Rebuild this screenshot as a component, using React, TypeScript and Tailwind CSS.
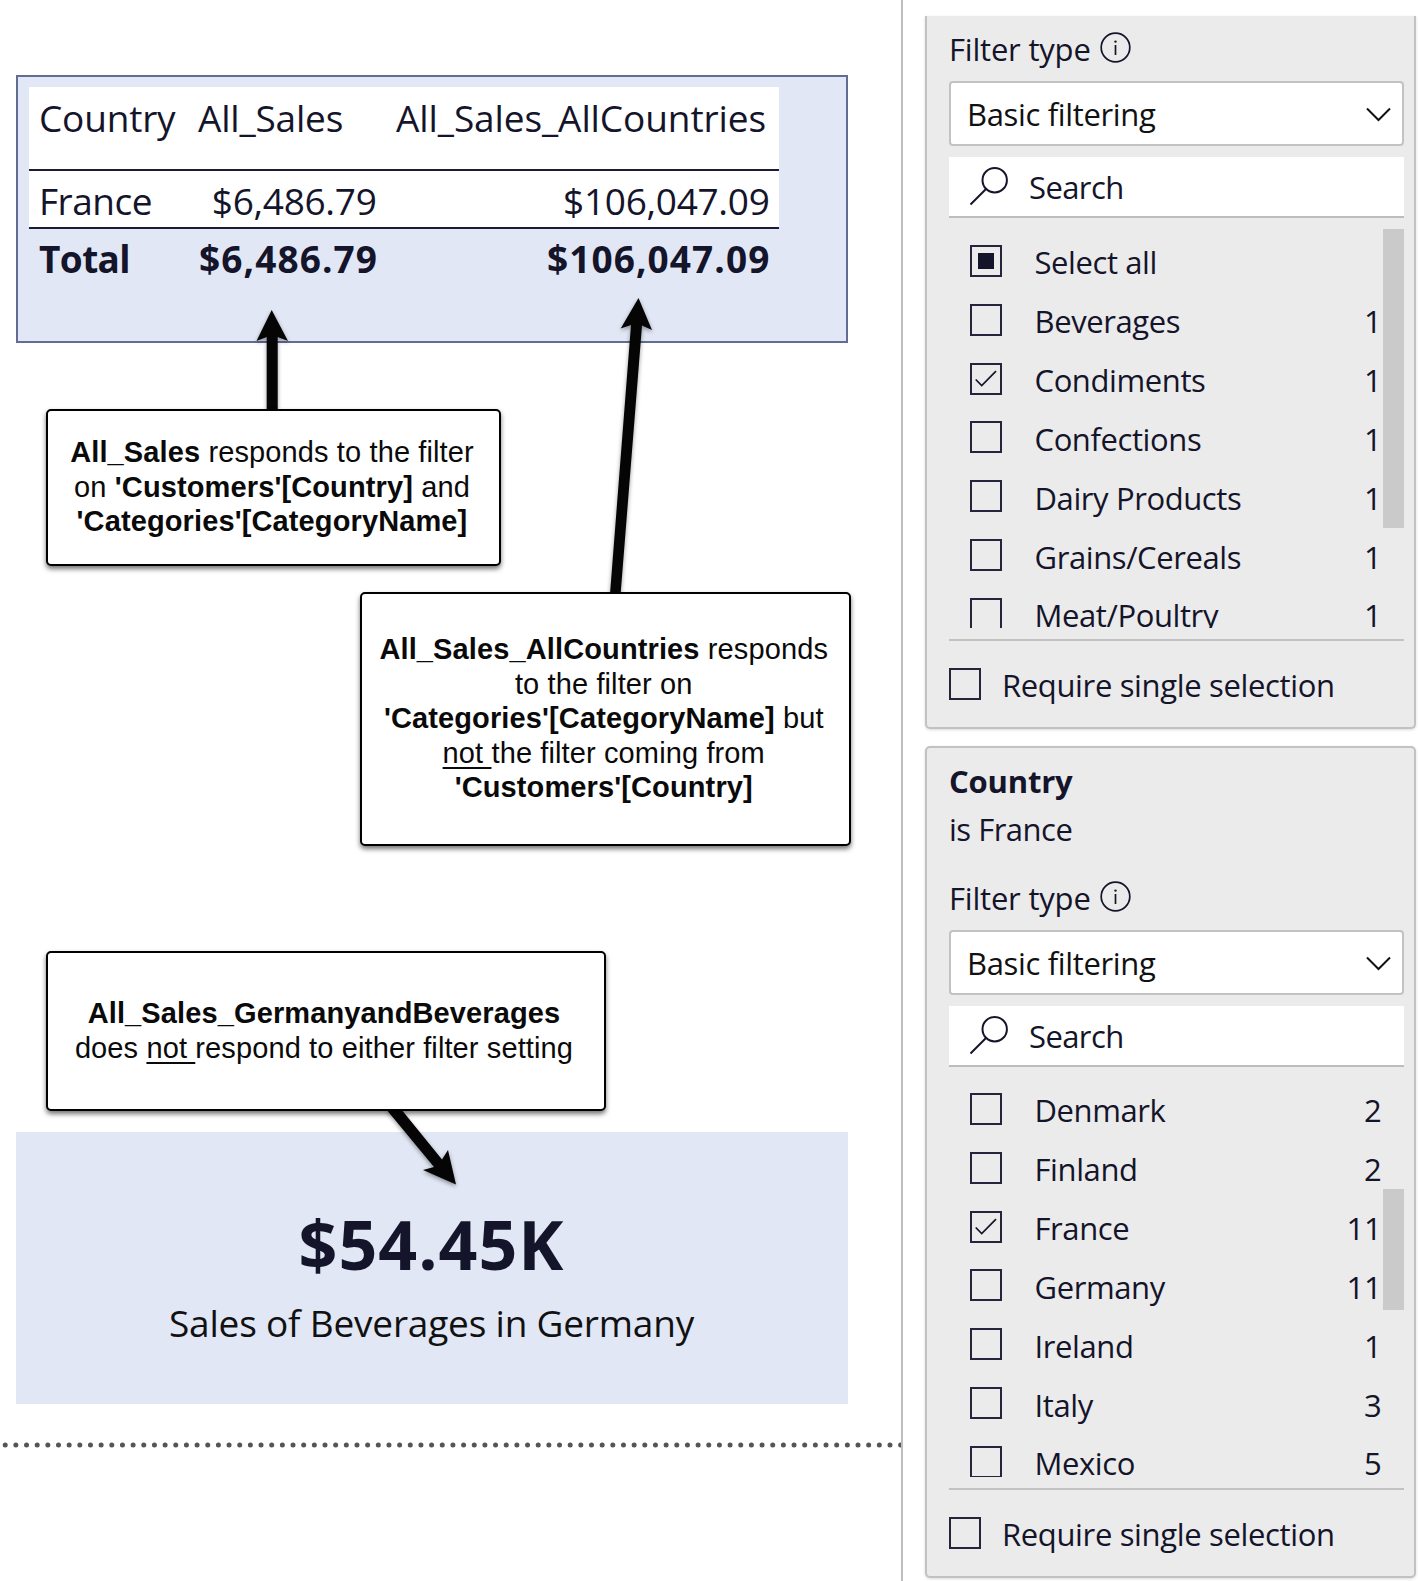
import React from "react";

type Item = { label: string; count?: string; state?: "checked" | "partial" };

const categories: Item[] = [
  { label: "Select all", state: "partial" },
  { label: "Beverages", count: "1" },
  { label: "Condiments", count: "1", state: "checked" },
  { label: "Confections", count: "1" },
  { label: "Dairy Products", count: "1" },
  { label: "Grains/Cereals", count: "1" },
  { label: "Meat/Poultry", count: "1" },
];

const countries: Item[] = [
  { label: "Denmark", count: "2" },
  { label: "Finland", count: "2" },
  { label: "France", count: "11", state: "checked" },
  { label: "Germany", count: "11" },
  { label: "Ireland", count: "1" },
  { label: "Italy", count: "3" },
  { label: "Mexico", count: "5" },
];

function Checkbox({ state }: { state?: "checked" | "partial" }) {
  return (
    <span className="flex size-8 shrink-0 items-center justify-center border-2 border-[#24243a]">
      {state === "partial" && <span className="size-4 bg-[#14142a]" />}
      {state === "checked" && (
        <svg width="22" height="18" viewBox="0 0 22 18" fill="none" stroke="#14142a" strokeWidth="1.7">
          <path d="M0.7 9.5 L6.7 15.5 L21 1.2" />
        </svg>
      )}
    </span>
  );
}

function FilterBody({ items, listPad, thumb }: { items: Item[]; listPad: string; thumb: string }) {
  return (
    <div>
      <div className="flex h-[42px] items-center gap-[9px]">
        <span>Filter type</span>
        <svg className="relative -top-[2px]" width="31" height="31" viewBox="0 0 31 31" fill="none" stroke="#14142a" strokeWidth="1.7">
          <circle cx="15.5" cy="15.5" r="14.3" />
          <path d="M15.5 13v10" />
          <circle cx="15.5" cy="9.6" r="1.2" fill="#14142a" stroke="none" />
        </svg>
      </div>
      <div className="mt-[11px] flex h-[65px] items-center justify-between rounded-[4px] border-2 border-[#c2c2c2] bg-white pr-[11px] pl-[16px] text-[#111]">
        <span className="pt-px tracking-[-0.35px]">Basic filtering</span>
        <svg className="mt-[2px]" width="25" height="15" viewBox="0 0 25 15" fill="none" stroke="#111" strokeWidth="2">
          <path d="M1 1.5 L12.5 13 L24 1.5" />
        </svg>
      </div>
      <div className="mt-[11px] flex h-[61px] items-center border-b-2 border-[#bdbdbd] bg-white pl-[20px]">
        <svg className="-mt-[2px]" width="40" height="40" viewBox="0 0 40 40" fill="none" stroke="#14142a" strokeWidth="2">
          <circle cx="25.7" cy="14.2" r="12.2" />
          <path d="M17 23 L1.5 38.5" />
        </svg>
        <span className="ml-[20px] pt-px tracking-[-0.6px]">Search</span>
      </div>
      <div className={"relative h-[409.5px] overflow-hidden " + listPad}>
        {items.map((item) => (
          <div key={item.label} className="flex h-[58.83px] items-center pr-[22.5px] pl-[21px]">
            <Checkbox state={item.state} />
            <span className="ml-[32.5px] flex-1 pt-[3px] tracking-[-0.4px]">{item.label}</span>
            <span className="pt-[3px]">{item.count}</span>
          </div>
        ))}
        <div className={"absolute right-0 w-[21px] bg-[#cbcacb] " + thumb} />
      </div>
      <div className="mt-[11.5px] h-[2px] bg-[#c2c2c2]" />
      <div className="mt-[27px] flex h-8 items-center gap-[21px]">
        <Checkbox />
        <span className="pt-px tracking-[-0.35px]">Require single selection</span>
      </div>
    </div>
  );
}

function Callout({ className, children }: { className: string; children: React.ReactNode }) {
  return (
    <div
      className={
        "absolute rounded-[5px] border-2 border-black bg-white text-center font-['Liberation_Sans',Arial,sans-serif] text-[29px] leading-[34.5px] tracking-[0.12px] whitespace-nowrap text-[#0a0a0a] shadow-[0_3px_5px_rgba(0,0,0,0.55)] " +
        className
      }
    >
      {children}
    </div>
  );
}

export default function App() {
  return (
    <div className="flex h-[1581px] w-[1418px] overflow-hidden bg-white font-['Open_Sans','Noto_Sans',sans-serif] text-[#14142a]">
      <main className="relative w-[901px] shrink-0 pt-[75px]">
        <section className="ml-[15.5px] h-[268px] w-[832px] border-2 border-[#626d94] bg-[#e2e7f5] pt-[10px] pl-[11.5px] text-[37px] leading-[50px] tracking-[-0.2px]">
          <div className="w-[750px]">
            <div className="grid h-[84px] grid-cols-[160px_198px_auto] border-b-2 border-[#1c1c34] bg-white pt-[6px] pl-[10px]">
              <span>Country</span>
              <span className="-ml-px">All_Sales</span>
              <span className="-ml-px tracking-[-0.1px]">All_Sales_AllCountries</span>
            </div>
            <div className="grid h-[58px] grid-cols-[160px_177.5px_393px] items-center border-b-2 border-[#1c1c34] bg-white pt-[3px] pl-[10px]">
              <span className="tracking-[-0.5px]">France</span>
              <span className="text-right tracking-[-0.3px]">$6,486.79</span>
              <span className="text-right tracking-[-0.3px]">$106,047.09</span>
            </div>
            <div className="grid h-[60px] grid-cols-[160px_178.5px_393px] items-center pl-[10px] font-bold tracking-[1.1px]">
              <span className="tracking-[-0.6px]">Total</span>
              <span className="text-right">$6,486.79</span>
              <span className="text-right">$106,047.09</span>
            </div>
          </div>
        </section>

        <section className="mt-[789px] ml-[15.5px] flex h-[272px] w-[832px] flex-col items-center bg-[#e2e7f5]">
          <div className="mt-[67px] h-[90px] text-[68px] leading-[90px] font-bold tracking-[1px]">$54.45K</div>
          <div className="mt-[9px] text-[37px] leading-[50px] tracking-[-0.2px] text-[#111]">Sales of Beverages in Germany</div>
        </section>

        <svg className="mt-[38px] block" width="901" height="6" viewBox="0 0 901 6">
          <line x1="5.2" y1="3" x2="901" y2="3" stroke="#555" strokeWidth="5" strokeLinecap="round" strokeDasharray="0 10.66" />
        </svg>

        <svg
          className="absolute top-0 left-0 drop-shadow-[0_2px_2px_rgba(0,0,0,0.4)]"
          width="901"
          height="1200"
          viewBox="0 0 901 1200"
          fill="#050505"
        >
          <path d="M271.7 310 L288 341 L277.7 337 V411 H266.7 V337 L256.5 341 Z" />
          <path d="M638.5 298 L652 330 L642 325.5 L620.6 594 H610 L631 325 L620.7 328.5 Z" />
          <path d="M456 1184.5 L448 1150 L442 1159.5 L401 1109 H386 L434 1167 L423 1170 Z" />
        </svg>

        <Callout className="top-[409px] left-[46px] h-[157px] w-[455px] pt-[24px] pr-[3px]">
          <b>All_Sales</b> responds to the filter
          <br />
          on <b>'Customers'[Country]</b> and
          <br />
          <b>'Categories'[CategoryName]</b>
        </Callout>
        <Callout className="top-[592px] left-[360px] h-[254px] w-[490.5px] pt-[38px] pr-[3px]">
          <b>All_Sales_AllCountries</b> responds
          <br />
          to the filter on
          <br />
          <b>'Categories'[CategoryName]</b> but
          <br />
          <span className="underline decoration-2 underline-offset-[4px]">not </span>the filter coming from
          <br />
          <b>'Customers'[Country]</b>
        </Callout>
        <Callout className="top-[951px] left-[46px] h-[160px] w-[560px] pt-[43px] pr-[4px]">
          <b>All_Sales_GermanyandBeverages</b>
          <br />
          does <span className="underline decoration-2 underline-offset-[4px]">not </span>respond to either filter setting
        </Callout>
      </main>

      <aside className="flex-1 border-l-2 border-[#bebebe] pl-[22px] text-[31px] leading-[42px] tracking-[-0.2px]">
        <section className="mt-[16px] h-[713px] w-[491px] rounded-b-[5px] border-2 border-t-0 border-[#c2c2c2] bg-[#ebebeb] pt-[12px] pr-[10px] pl-[22px] shadow-[0_1px_3px_rgba(0,0,0,0.15)]">
          <FilterBody items={categories} listPad="pt-[13.5px]" thumb="top-[11px] h-[299px]" />
        </section>
        <section className="mt-[17px] h-[832px] w-[491px] rounded-[5px] border-2 border-[#c2c2c2] bg-[#ebebeb] pt-[9px] pr-[10px] pl-[22px] shadow-[0_1px_3px_rgba(0,0,0,0.15)]">
          <div className="h-[48px] leading-[48px] font-bold">Country</div>
          <div className="mb-[24px] h-[48px] leading-[49px] tracking-[-0.5px]">is France</div>
          <FilterBody items={countries} listPad="pt-[12.5px]" thumb="top-[122px] h-[121px]" />
        </section>
      </aside>
    </div>
  );
}
